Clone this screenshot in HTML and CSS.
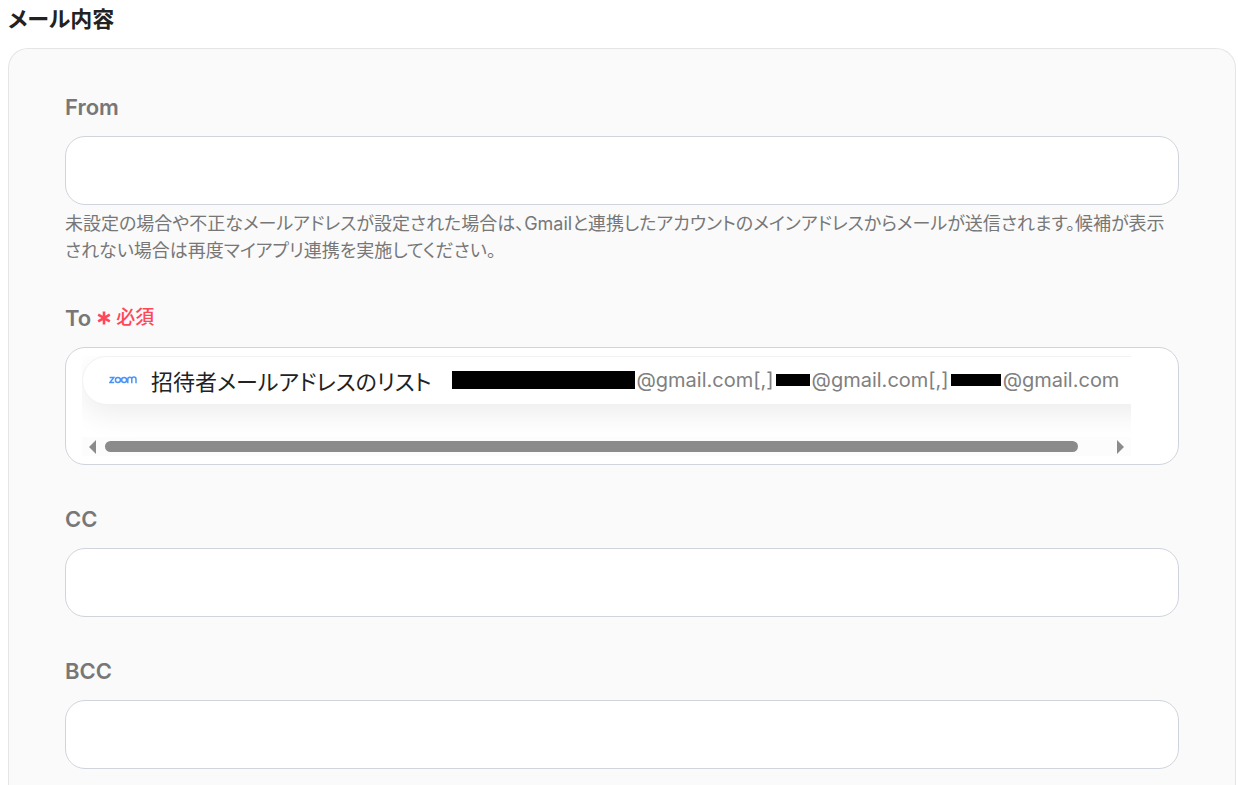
FILE: index.html
```html
<!DOCTYPE html>
<html lang="ja">
<head>
<meta charset="utf-8">
<meta name="viewport" content="width=device-width, initial-scale=1">
<title>メール内容</title>
<link rel="stylesheet" href="styles.css">
</head>
<body>
<main class="page">
  <h1 class="title">メール内容</h1>
  <form class="panel">
    <div class="field">
      <label class="label" for="from">From</label>
      <input class="box" id="from" type="text">
      <p class="help">未設定の場合や不正なメールアドレスが設定された場合は、Gmailと連携したアカウントのメインアドレスからメールが送信されます。候補が表示されない場合は再度マイアプリ連携を実施してください。</p>
    </div>
    <div class="field">
      <div class="label" id="to-label">To <span class="required"><svg class="star" viewBox="0 0 14 16" aria-hidden="true"><path d="M7 1.5v13M1.2 4.7l11.6 6.6M12.8 4.7L1.2 11.3"/></svg>必須</span></div>
      <div class="box box-tokens" role="group" aria-labelledby="to-label">
        <div class="scroller">
          <div class="viewport">
            <div class="token">
              <svg class="zoom" viewBox="0 0 28 8" role="img" aria-label="zoom"><path d="M.6 1.4h4.2L.9 6.6h4.3M18.8 7.2V3.2a1.9 1.9 0 0 1 4 0v4M22.8 7.2V3.2a2.1 2.1 0 0 1 4.2 0v4"/><circle cx="8.9" cy="4" r="2.5"/><circle cx="15.1" cy="4" r="2.5"/></svg>
              <span class="name">招待者メールアドレスのリスト</span>
              <span class="value"><i class="mask mask-long"></i>@gmail.com[,]<i class="mask mask-short"></i>@gmail.com[,]<i class="mask mask-mid"></i>@gmail.com</span>
            </div>
          </div>
          <div class="scrollbar" aria-hidden="true">
            <span class="arrow arrow-left"></span>
            <span class="track"><span class="thumb"></span></span>
            <span class="arrow arrow-right"></span>
          </div>
        </div>
      </div>
    </div>
    <div class="field">
      <label class="label" for="cc">CC</label>
      <input class="box" id="cc" type="text">
    </div>
    <div class="field">
      <label class="label" for="bcc">BCC</label>
      <input class="box" id="bcc" type="text">
    </div>
  </form>
</main>
</body>
</html>
```
FILE: styles.css
```css
* { box-sizing: border-box; }
body {
  margin: 0;
  background: #fff;
  color: #222;
  font-family: Inter, "Noto Sans CJK JP", sans-serif;
  font-feature-settings: "palt";
}
.page { padding: 4px 6px 0 8px; }
.title {
  margin: 0 0 14px;
  font-size: 22px;
  line-height: 30px;
  font-weight: 700;
}
.panel {
  display: flex;
  flex-direction: column;
  gap: 38px;
  padding: 42px 56px 16px;
  border: 1px solid #e4e5e7;
  border-bottom: 0;
  border-radius: 20px 20px 0 0;
  background: #fafafa;
}
.field { display: flex; flex-direction: column; }
.label {
  display: flex;
  align-items: center;
  gap: 6px;
  height: 32px;
  margin-bottom: 13px;
  font-size: 22px;
  line-height: 32px;
  font-weight: 600;
  color: #777;
}
.required {
  display: flex;
  align-items: center;
  gap: 5px;
  font-size: 19px;
  font-weight: 500;
  color: #ff4757;
}
.star {
  width: 14px;
  height: 16px;
  fill: none;
  stroke: currentColor;
  stroke-width: 2.6;
}
.box {
  width: 100%;
  height: 69px;
  padding: 0 16px;
  border: 1px solid #d0d4dc;
  border-radius: 20px;
  background: #fff;
  font: inherit;
  font-size: 20px;
}
.help {
  margin: 5px 0 0;
  font-size: 18px;
  line-height: 27px;
  color: #777;
}
.box-tokens { height: auto; padding: 8px 47px 8px 16px; }
.scroller { overflow: hidden; }
.viewport { height: 81px; overflow: hidden; }
.token {
  display: flex;
  align-items: center;
  width: max-content;
  min-width: 110%;
  height: 49px;
  padding: 0 0 2px 26px;
  border: 1px solid #f2f2f2;
  border-radius: 25px;
  background: #fff;
  box-shadow: 0 10px 28px rgba(0, 0, 0, .07);
}
.zoom {
  width: 28px;
  height: 8px;
  margin-right: 14px;
  fill: none;
  stroke: #4a94f8;
  stroke-width: 1.5;
}
.name {
  margin-right: 20px;
  font-family: "Noto Sans CJK JP", sans-serif;
  font-size: 22px;
  line-height: 32px;
}
.value {
  display: flex;
  align-items: center;
  gap: 2px;
  font-size: 20px;
  line-height: 32px;
  color: #808080;
}
.mask { height: 12px; background: #000; }
.mask-long { width: 183px; height: 18px; }
.mask-short { width: 34px; }
.mask-mid { width: 50px; }
.scrollbar {
  display: flex;
  align-items: center;
  gap: 9px;
  height: 19px;
  padding: 0 7px;
  background: #fcfcfc;
}
.arrow { border: 7px solid transparent; }
.arrow-left { border-left: 0; border-right-color: #8b8b8b; }
.arrow-right { border-right: 0; border-left-color: #8b8b8b; }
.track { flex: 1; }
.thumb { display: block; width: 97%; height: 11px; border-radius: 6px; background: #8b8b8b; }
```
